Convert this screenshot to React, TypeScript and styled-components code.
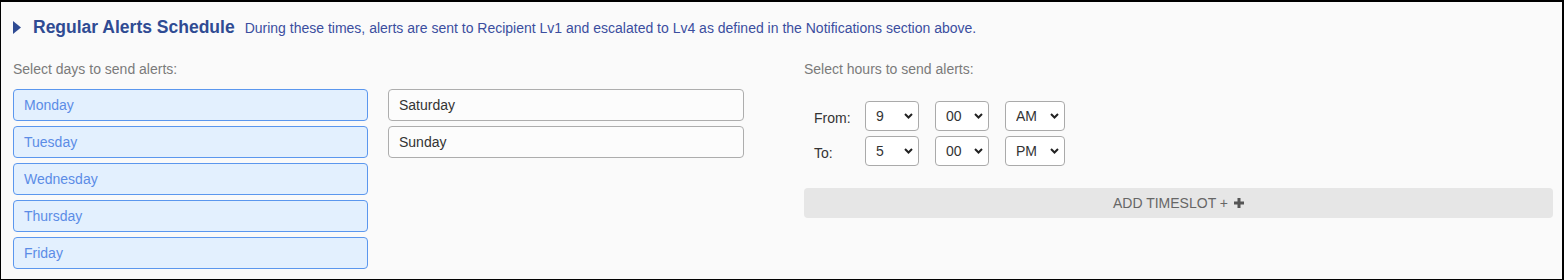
import styled, { createGlobalStyle } from 'styled-components';

const GlobalStyle = createGlobalStyle`
  html, body {
    margin: 0;
    padding: 0;
    background: #fafafa;
  }
  body {
    font-family: "Liberation Sans", Arial, sans-serif;
  }
`;

const Frame = styled.section`
  box-sizing: border-box;
  width: 1564px;
  height: 280px;
  background: #fafafa;
  border-style: solid;
  border-color: #000;
  border-width: 2px 2px 1px 1px;
  padding: 0 9px 0 12px;
`;

const Header = styled.div`
  display: flex;
  align-items: baseline;
  margin-top: 13px;
  height: 24px;
  line-height: 24px;
`;

const Caret = styled.svg`
  width: 8px;
  height: 13px;
  margin-right: 12px;
  align-self: center;
  flex-shrink: 0;
`;

const Title = styled.h2`
  margin: 0;
  font-size: 17.5px;
  font-weight: 700;
  color: #2f4b93;
`;

const Description = styled.span`
  margin-left: 10px;
  font-size: 14px;
  color: #3b4e9f;
`;

const Columns = styled.div`
  display: grid;
  grid-template-columns: 731px 749px;
  column-gap: 60px;
  margin-top: 21px;
`;

const Label = styled.div`
  font-size: 14px;
  line-height: 18px;
  color: #7a7a7a;
`;

const DayGrid = styled.div`
  display: grid;
  grid-template-columns: 355px 356px;
  grid-auto-flow: column;
  grid-template-rows: repeat(5, 32px);
  column-gap: 20px;
  row-gap: 5px;
  margin-top: 11px;
`;

const DayButton = styled.button<{ $active?: boolean }>`
  box-sizing: border-box;
  height: 32px;
  padding: 0 10px;
  text-align: left;
  font-family: inherit;
  font-size: 14px;
  border-radius: 4px;
  border: 1px solid ${(p) => (p.$active ? '#5b97ee' : '#adadad')};
  background: ${(p) => (p.$active ? '#e3f0fe' : '#fcfcfc')};
  color: ${(p) => (p.$active ? '#5b8ce6' : '#333')};
  cursor: pointer;
`;

const TimeTable = styled.div`
  display: grid;
  grid-template-columns: 35px 54px 54px 60px;
  column-gap: 16px;
  row-gap: 5px;
  margin: 23px 0 0 10px;
  width: max-content;
  align-items: center;
`;

const RowLabel = styled.span`
  grid-column-start: 1;
  font-size: 14px;
  color: #333;
  margin-top: 3px;
`;

const SelectWrap = styled.div`
  position: relative;
  height: 30px;
`;

const Select = styled.select`
  appearance: none;
  -webkit-appearance: none;
  box-sizing: border-box;
  width: 100%;
  height: 30px;
  padding: 0 0 0 10px;
  font-family: inherit;
  font-size: 14px;
  color: #333;
  background: #fff;
  border: 1px solid #aaa;
  border-radius: 4px;
  outline: none;
`;

const Chevron = styled.svg`
  position: absolute;
  right: 6px;
  top: 12px;
  width: 9px;
  height: 6px;
  pointer-events: none;
`;

const AddButton = styled.button`
  display: flex;
  align-items: center;
  justify-content: center;
  gap: 6px;
  box-sizing: border-box;
  width: 749px;
  height: 30px;
  margin-top: 22px;
  border: none;
  border-radius: 4px;
  background: #e6e6e6;
  font-family: inherit;
  font-size: 14px;
  color: #666;
  cursor: pointer;
`;

const days = [
  { name: 'Monday', active: true },
  { name: 'Tuesday', active: true },
  { name: 'Wednesday', active: true },
  { name: 'Thursday', active: true },
  { name: 'Friday', active: true },
  { name: 'Saturday', active: false },
  { name: 'Sunday', active: false },
];

const times = [
  { label: 'From:', hour: '9', minute: '00', period: 'AM' },
  { label: 'To:', hour: '5', minute: '00', period: 'PM' },
];

const hours = Array.from({ length: 12 }, (_, i) => String(i + 1));
const minutes = ['00', '15', '30', '45'];

const TimeSelect = ({ value, options }: { value: string; options: string[] }) => (
  <SelectWrap>
    <Select defaultValue={value}>
      {options.map((o) => (
        <option key={o} value={o}>
          {o}
        </option>
      ))}
    </Select>
    <Chevron viewBox="0 0 9 6">
      <path d="M1 1 L4.5 4.5 L8 1" fill="none" stroke="#222" strokeWidth="2" />
    </Chevron>
  </SelectWrap>
);

export default function App() {
  return (
    <>
      <GlobalStyle />
      <Frame>
        <Header>
          <Caret viewBox="0 0 8 13">
            <path d="M0 0 L8 6.5 L0 13 Z" fill="#2f4b93" />
          </Caret>
          <Title>Regular Alerts Schedule</Title>
          <Description>
            During these times, alerts are sent to Recipient Lv1 and escalated to Lv4 as
            defined in the Notifications section above.
          </Description>
        </Header>

        <Columns>
          <div>
            <Label>Select days to send alerts:</Label>
            <DayGrid>
              {days.map((d) => (
                <DayButton key={d.name} $active={d.active}>
                  {d.name}
                </DayButton>
              ))}
            </DayGrid>
          </div>

          <div>
            <Label>Select hours to send alerts:</Label>
            <TimeTable>
              {times.map((t) => [
                <RowLabel key={t.label}>{t.label}</RowLabel>,
                <TimeSelect key={t.label + 'h'} value={t.hour} options={hours} />,
                <TimeSelect key={t.label + 'm'} value={t.minute} options={minutes} />,
                <TimeSelect key={t.label + 'p'} value={t.period} options={['AM', 'PM']} />,
              ])}
            </TimeTable>
            <AddButton>
              ADD TIMESLOT +
              <svg width="10" height="10" viewBox="0 0 10 10">
                <path d="M3.5 0 H6.5 V3.5 H10 V6.5 H6.5 V10 H3.5 V6.5 H0 V3.5 H3.5 Z" fill="#555" />
              </svg>
            </AddButton>
          </div>
        </Columns>
      </Frame>
    </>
  );
}
